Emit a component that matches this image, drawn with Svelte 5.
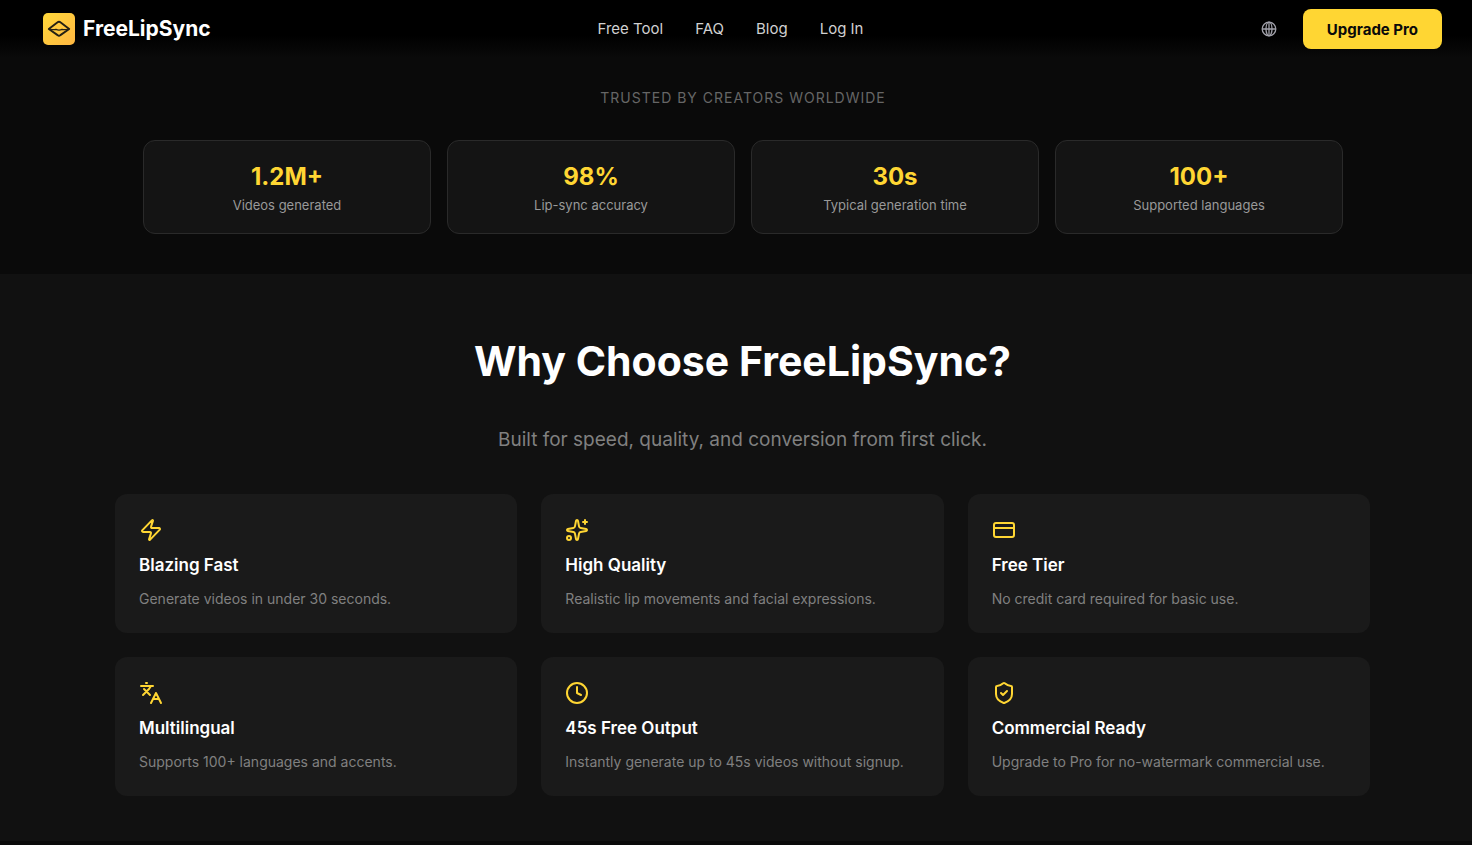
<script>
  const links = ['Free Tool', 'FAQ', 'Blog', 'Log In'];

  const stats = [
    { value: '1.2M+', label: 'Videos generated' },
    { value: '98%', label: 'Lip-sync accuracy' },
    { value: '30s', label: 'Typical generation time' },
    { value: '100+', label: 'Supported languages' }
  ];

  const features = [
    { icon: 'zap', title: 'Blazing Fast', text: 'Generate videos in under 30 seconds.' },
    { icon: 'sparkles', title: 'High Quality', text: 'Realistic lip movements and facial expressions.' },
    { icon: 'card', title: 'Free Tier', text: 'No credit card required for basic use.' },
    { icon: 'language', title: 'Multilingual', text: 'Supports 100+ languages and accents.' },
    { icon: 'clock', title: '45s Free Output', text: 'Instantly generate up to 45s videos without signup.' },
    { icon: 'shield', title: 'Commercial Ready', text: 'Upgrade to Pro for no-watermark commercial use.' }
  ];
</script>

<div class="page">
  <header>
    <a class="brand" href="#home">
      <svg class="logo" viewBox="0 0 32 32" aria-hidden="true">
        <defs>
          <linearGradient id="gold" x1="0" y1="0" x2="1" y2="1">
            <stop offset="0" stop-color="#ffd83a" />
            <stop offset="1" stop-color="#ffb742" />
          </linearGradient>
        </defs>
        <rect width="32" height="32" rx="5" fill="url(#gold)" />
        <g fill="none" stroke="#242014" stroke-linecap="round" stroke-linejoin="round">
          <path stroke-width="1.9" d="M5.8 16 14.6 9.3Q16 8 17.4 9.3L26.2 16 17.4 22.1Q16 23.4 14.6 22.1Z" />
          <path stroke-width="1.2" d="M6.5 16Q10 17.2 13 16.4 16 17.8 19 16.4 22 17.2 25.5 16" />
        </g>
      </svg>
      <span>FreeLipSync</span>
    </a>
    <nav aria-label="Main">
      {#each links as link}
        <a href="#{link.toLowerCase().replace(' ', '-')}">{link}</a>
      {/each}
    </nav>
    <div class="actions">
      <button class="globe" aria-label="Language">
        <svg viewBox="0 0 16 16" aria-hidden="true">
          <circle cx="8" cy="8" r="6.8" />
          <ellipse cx="8" cy="8" rx="3" ry="6.8" />
          <path d="M1.2 8h13.6M8 1.2v13.6" />
        </svg>
      </button>
      <button class="upgrade">Upgrade Pro</button>
    </div>
  </header>

  <section class="trusted">
    <p class="eyebrow">Trusted by creators worldwide</p>
    <div class="stats">
      {#each stats as stat}
        <div class="stat">
          <strong>{stat.value}</strong>
          <span>{stat.label}</span>
        </div>
      {/each}
    </div>
  </section>

  <section class="why">
    <h2>Why Choose FreeLipSync?</h2>
    <p class="lead">Built for speed, quality, and conversion from first click.</p>
    <div class="features">
      {#each features as feature}
        <article>
          <svg class="icon" viewBox="0 0 24 24" aria-hidden="true">
            {#if feature.icon === 'zap'}
              <path d="M4 14a1 1 0 0 1-.78-1.63l9.9-10.2a.5.5 0 0 1 .86.46l-1.92 6.02A1 1 0 0 0 13 10h7a1 1 0 0 1 .78 1.63l-9.9 10.2a.5.5 0 0 1-.86-.46l1.92-6.02A1 1 0 0 0 11 14z" />
            {:else if feature.icon === 'sparkles'}
              <path d="M11.017 2.814a1 1 0 0 1 1.966 0l1.051 5.558a2 2 0 0 0 1.594 1.594l5.558 1.051a1 1 0 0 1 0 1.966l-5.558 1.051a2 2 0 0 0-1.594 1.594l-1.051 5.558a1 1 0 0 1-1.966 0l-1.051-5.558a2 2 0 0 0-1.594-1.594l-5.558-1.051a1 1 0 0 1 0-1.966l5.558-1.051a2 2 0 0 0 1.594-1.594z" />
              <path d="M20 2v4M22 4h-4" />
              <circle cx="4" cy="20" r="2" />
            {:else if feature.icon === 'card'}
              <rect x="2" y="5" width="20" height="14" rx="2" />
              <path d="M2 10h20" />
            {:else if feature.icon === 'language'}
              <path d="M2 5h12M7 2h1M4 14l6-6 2-3M5 8l6 6M22 22l-5-10-5 10M14 18h6" />
            {:else if feature.icon === 'clock'}
              <circle cx="12" cy="12" r="10" />
              <path d="M12 6v6l4 2" />
            {:else}
              <path d="M20 13c0 5-3.5 7.5-7.66 8.95a1 1 0 0 1-.67-.01C7.5 20.5 4 18 4 13V6a1 1 0 0 1 1-1c2 0 4.5-1.2 6.24-2.72a1.17 1.17 0 0 1 1.52 0C14.51 3.81 17 5 19 5a1 1 0 0 1 1 1z" />
              <path d="m9 12 2 2 4-4" />
            {/if}
          </svg>
          <h3>{feature.title}</h3>
          <p>{feature.text}</p>
        </article>
      {/each}
    </div>
  </section>
</div>

<style>
  :global(body) {
    margin: 0;
    background: #0a0a0a;
  }

  .page {
    box-sizing: border-box;
    padding-bottom: 4px;
    font-family: Inter, sans-serif;
    color: #fff;
  }

  header {
    display: grid;
    grid-template-columns: 1fr auto 1fr;
    align-items: center;
    height: 58px;
    padding: 0 30px 0 43px;
    background: linear-gradient(#000 60%, #0a0a0a);
  }

  a {
    color: inherit;
    text-decoration: none;
  }

  button {
    border: 0;
    font-family: inherit;
    cursor: pointer;
  }

  .brand {
    display: flex;
    align-items: center;
    gap: 8px;
    font-size: 21px;
    line-height: 28px;
    font-weight: 700;
  }

  .logo {
    width: 32px;
    height: 32px;
  }

  nav {
    display: flex;
    gap: 32px;
    margin-right: 24px;
    font-size: 15px;
    line-height: 20px;
    color: #d1d1d1;
  }

  .actions {
    display: flex;
    align-items: center;
    justify-content: flex-end;
    gap: 18px;
  }

  .globe {
    display: flex;
    padding: 8px;
    background: none;
  }

  .globe svg {
    width: 16px;
    height: 16px;
    fill: none;
    stroke: #a1a1aa;
    stroke-width: 1.3;
  }

  .upgrade {
    height: 40px;
    padding: 0 24px;
    border-radius: 8px;
    background: #ffd633;
    color: #0a0a0a;
    font-size: 15px;
    font-weight: 700;
  }

  .trusted {
    padding: 30px 129px 40px 143px;
    text-align: center;
  }

  .eyebrow {
    margin: 0 0 32px;
    font-size: 14px;
    line-height: 20px;
    letter-spacing: 1px;
    text-transform: uppercase;
    color: #666;
  }

  .stats {
    display: grid;
    grid-template-columns: repeat(4, 1fr);
    gap: 16px;
  }

  .stat {
    display: flex;
    flex-direction: column;
    gap: 4px;
    padding: 20px 16px;
    border: 1px solid #2a2a2a;
    border-radius: 12px;
    background: #141414;
  }

  .stat strong {
    font-size: 24px;
    line-height: 32px;
    font-weight: 700;
    color: #ffd633;
  }

  .stat span {
    font-size: 13px;
    line-height: 16px;
    color: #999;
  }

  .why {
    padding: 63px 102px 45px 115px;
    background: #111;
    text-align: center;
  }

  h2 {
    margin: 0;
    font-size: 41px;
    line-height: 48px;
    font-weight: 700;
  }

  .lead {
    margin: 41px 0 40px;
    font-size: 19px;
    line-height: 28px;
    color: #808080;
  }

  .features {
    display: grid;
    grid-template-columns: repeat(3, 1fr);
    gap: 24px;
    text-align: left;
  }

  article {
    padding: 24px;
    border-radius: 12px;
    background: #1a1a1a;
  }

  .icon {
    display: block;
    width: 24px;
    height: 24px;
    fill: none;
    stroke: #ffd633;
    stroke-width: 2;
    stroke-linecap: round;
    stroke-linejoin: round;
  }

  h3 {
    margin: 12px 0;
    font-size: 17px;
    line-height: 23px;
    font-weight: 600;
  }

  article p {
    margin: 0;
    font-size: 14px;
    line-height: 20px;
    color: #808080;
  }
</style>
